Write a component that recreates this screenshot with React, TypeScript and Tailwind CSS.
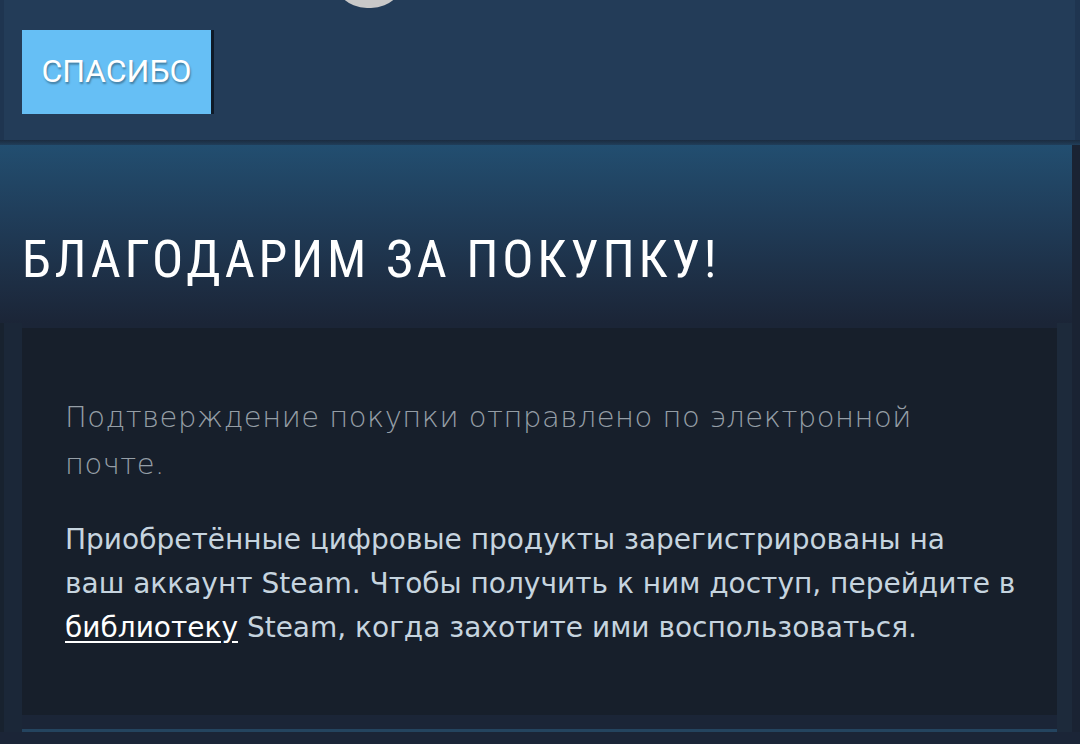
export default function App() {
  return (
    <div className="w-[1080px] h-[744px] overflow-hidden bg-[#1b2537] font-['DejaVu_Sans','Noto_Sans',sans-serif]">
      {/* top bar with avatar peeking in */}
      <div className="relative h-[140px] bg-[#233c58] border-l-4 border-r-[5px] border-[#1f3550] px-[18px] pt-[30px]">
        <div className="absolute left-[328px] -top-[62px] w-[74px] h-[70px] rounded-full bg-[#c9c9c9]" />
        <button className="h-[84px] w-[189px] bg-[#66bff5] shadow-[3px_0_0_#0e1a28] text-white text-[32px] leading-none font-['Roboto','Liberation_Sans',sans-serif] [text-shadow:1px_2px_2px_rgba(0,0,0,0.35)] flex items-center justify-center pb-[2px]">
          СПАСИБО
        </button>
      </div>
      <div className="h-[5px] bg-gradient-to-b from-[#1b2c40] to-[#203e5a]" />

      <div className="bg-gradient-to-b from-[#224e70] via-[#1f3954] via-50% to-[#1b2537] h-[178px] flex items-end pb-[37px] pl-[22px] border-r-[8px] border-[#1a2333]">
        <h1 className="text-white text-[52px] leading-none tracking-[3.8px] font-['Liberation_Sans_Narrow','Roboto_Condensed','Roboto',sans-serif] whitespace-nowrap">
          БЛАГОДАРИМ ЗА ПОКУПКУ!
        </h1>
      </div>

      <div className="flex border-r-[8px] border-[#1a2333]">
        <div className="w-[22px] shrink-0 bg-[#1b2738] border-l-4 border-[#18222f]" />
        <div className="flex-1 min-w-0 pt-[5px]">
          <div className="bg-[#171f2b] h-[387px] pl-[43px] pr-[20px] pt-[66px]">
            <p className="max-w-[900px] text-[#959ea6] text-[29px] tracking-[0.5px] font-extralight leading-[47px]">
              Подтверждение покупки отправлено по электронной почте.
            </p>
            <p className="mt-[30px] text-[#c6d4df] text-[28px] leading-[44px]">
              Приобретённые цифровые продукты зарегистрированы на
              <br />
              ваш аккаунт Steam. Чтобы получить к ним доступ, перейдите в
              <br />
              <a className="text-white underline underline-offset-4">библиотеку</a> Steam, когда захотите ими воспользоваться.
            </p>
          </div>
          <div className="mt-[14px] h-[3px] bg-[#24445f]" />
        </div>
        <div className="w-[15px] shrink-0 bg-[#1d2a3b]" />
      </div>
    </div>
  )
}
